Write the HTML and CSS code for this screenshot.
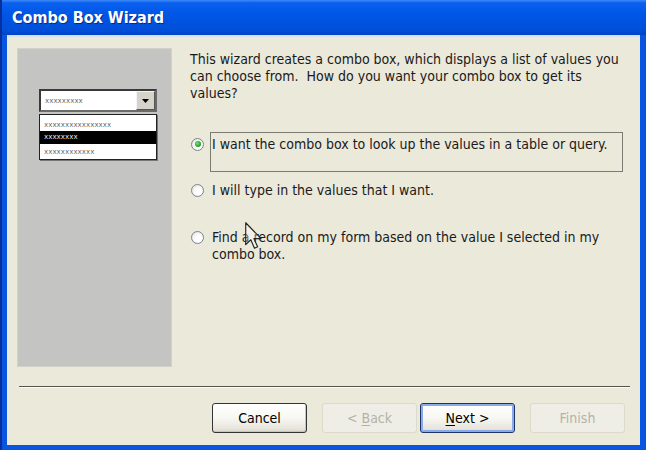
FILE: index.html
```html
<!DOCTYPE html>
<html lang="en">
<head>
    <meta charset="UTF-8">
    <title>Combo Box Wizard</title>
    <link rel="stylesheet" href="styles.css">
</head>
<body>
    <div class="window">
        <div class="titlebar">
            <span class="title">Combo Box Wizard</span>
        </div>

        <div class="client">
            <div class="main">
                <!-- picture of a combo box on the left -->
                <div class="preview">
                    <div class="combo">
                        <span class="combo-text">xxxxxxxxx</span>
                        <span class="combo-btn">
                            <svg width="7" height="4" viewBox="0 0 7 4"><path d="M0 0h7L3.5 4z" fill="#000"/></svg>
                        </span>
                    </div>
                    <div class="list">
                        <div class="row">xxxxxxxxxxxxxxxx</div>
                        <div class="row selected">xxxxxxxx</div>
                        <div class="row last">xxxxxxxxxxxx</div>
                    </div>
                </div>

                <div class="content">
                    <p class="intro">This wizard creates a combo box, which displays a list of values you<br>can choose from.&nbsp; How do you want your combo box to get its<br>values?</p>

                    <div class="options">
                        <label class="option">
                            <span class="radio checked"></span>
                            <span class="label-box focused">I want the combo box to look up the values in a table or query.</span>
                        </label>
                        <label class="option">
                            <span class="radio"></span>
                            <span class="label-box">I will type in the values that I want.</span>
                        </label>
                        <label class="option">
                            <span class="radio"></span>
                            <span class="label-box">Find a record on my form based on the value I selected in my<br>combo box.</span>
                        </label>
                    </div>
                </div>
            </div>

            <div class="separator"></div>

            <div class="buttons">
                <button class="btn cancel">Cancel</button>
                <button class="btn back" disabled>&lt; <u>B</u>ack</button>
                <button class="btn next"><u>N</u>ext &gt;</button>
                <button class="btn" disabled>Finish</button>
            </div>
        </div>

        <!-- mouse pointer -->
        <svg class="cursor" width="17" height="27" viewBox="0 0 12 19">
            <path d="M0.5 0.5v15.5l3.6-3.5 2.6 6 2.2-1-2.6-5.8h5.1z" fill="#fff" fill-opacity="0.35" stroke="#222" stroke-width="0.8" stroke-linejoin="round"/>
        </svg>
    </div>
</body>
</html>
```

FILE: styles.css
```css
:root {
    --face: #ebe9da;
    --panel: #c4c4c2;
    --text: #1a1a1a;
    --xp-blue: #0a55e0;
}

* {
    margin: 0;
    padding: 0;
    box-sizing: border-box;
}

body {
    width: 646px;
    height: 450px;
    overflow: hidden;
    font-family: "DejaVu Sans Condensed", "DejaVu Sans", sans-serif;
    font-size: 14px;
    color: var(--text);
}

.window {
    position: relative;
    height: 450px;
    display: flex;
    flex-direction: column;
    background: var(--xp-blue);
    border-left: 2px solid #0b2f9a;
}

.titlebar {
    height: 35px;
    flex-shrink: 0;
    display: flex;
    align-items: center;
    padding-left: 10px;
    background: linear-gradient(to bottom, #3d8af7 0, #0b61ee 8%, #0056e5 40%, #0050da 85%, #0044c4 100%);
}

.title {
    color: #fff;
    font-weight: bold;
    font-size: 16px;
    text-shadow: 1px 1px 0 #0a2a8a;
}

.client {
    flex: 1;
    margin: 0 6px 5px 5px;
    background: var(--face);
    border-top: 2px solid #d6e0f2;
}

.main {
    display: flex;
    padding: 11px 0 0 10px;
}

/* left picture */
.preview {
    width: 155px;
    height: 319px;
    flex-shrink: 0;
    background: var(--panel);
    border: 1px solid #d2d1ca;
    padding: 40px 0 0 21px;
}

.combo {
    width: 118px;
    height: 23px;
    display: flex;
    align-items: center;
    justify-content: space-between;
    background: #fff;
    border: 2px solid #3a3a3a;
    border-right-color: #6a6a6a;
    border-bottom-color: #6a6a6a;
    padding-left: 4px;
}

.combo-text,
.row {
    font-family: "Liberation Mono", monospace;
    font-size: 7px;
    color: #555;
}

.combo-btn {
    width: 19px;
    height: 19px;
    display: flex;
    align-items: center;
    justify-content: center;
    background: #d6d3cb;
    border: 1px solid;
    border-color: #f4f4f4 #555 #555 #f4f4f4;
}

.list {
    width: 118px;
    height: 46px;
    margin-top: 2px;
    background: #fff;
    border: 1px solid #222;
    box-shadow: 1px 1px 0 #777;
    padding-top: 4px;
}

.row {
    height: 12px;
    line-height: 12px;
    padding-left: 4px;
}

.row.selected {
    height: 13px;
    line-height: 13px;
    background: #000;
    color: #fff;
}

.row.last {
    height: 11px;
    line-height: 11px;
    margin-top: 3px;
}

/* right side */
.content {
    margin-left: 18px;
    padding-top: 3px;
}

.intro {
    line-height: 17px;
    white-space: nowrap;
}

.options {
    margin-top: 30px;
    display: flex;
    flex-direction: column;
    gap: 6.5px;
}

.option {
    display: flex;
    align-items: flex-start;
}

.radio {
    width: 13px;
    height: 13px;
    margin: 5.5px 0 0 1px;
    border-radius: 50%;
    border: 1px solid #7b8590;
    background: radial-gradient(circle at 60% 60%, #ffffff 30%, #dedcd2 100%);
    display: flex;
    align-items: center;
    justify-content: center;
    flex-shrink: 0;
}

.radio.checked::after {
    content: '';
    width: 6px;
    height: 6px;
    border-radius: 50%;
    background: radial-gradient(circle at 40% 40%, #7be07b 0, #25a325 60%, #16801a 100%);
}

.label-box {
    width: 413px;
    height: 40px;
    margin-left: 6px;
    border: 1px solid transparent;
    padding: 2.5px 0 0 1px;
    line-height: 17px;
    white-space: nowrap;
}

.label-box.focused {
    border-color: #7c7b72;
}

.separator {
    margin: 19px 10px 0 12px;
    border-top: 1px solid #55554e;
    border-bottom: 1px solid #fbfbf6;
}

.buttons {
    display: flex;
    justify-content: flex-end;
    padding: 15px 15px 0 0;
}

.btn {
    width: 95px;
    height: 30px;
    font-family: inherit;
    font-size: 14px;
    color: #000;
    border: 1px solid #24344c;
    border-radius: 3px;
    background: linear-gradient(to bottom, #ffffff 0, #f7f7f3 50%, #e6e4da 90%, #d6d3c6 100%);
}

.btn u {
    text-underline-offset: 2px;
}

.cancel {
    margin-right: 15px;
    border-color: #333;
    box-shadow: inset -1px -1px 0 #c9c6b8;
}

.back {
    margin-right: 3px;
}

.next {
    margin-right: 15px;
    border-color: #1c3468;
    box-shadow: inset 0 0 0 2px #8aaaea;
}

.btn:disabled {
    color: #b4b2a6;
    border-color: #dcdacd;
    background: #efeee6;
}

.cursor {
    position: absolute;
    left: 243px;
    top: 222px;
}
```
